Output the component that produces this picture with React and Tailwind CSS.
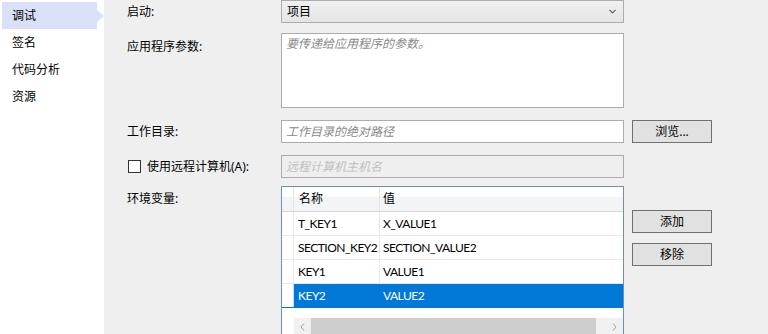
import React from 'react';

const font = { fontFamily: '"Noto Sans", "Noto Sans CJK SC", sans-serif' };
const cellFont = { fontFamily: 'Lato, "Noto Sans CJK SC", sans-serif' };

const navItems = ['调试', '签名', '代码分析', '资源'];

const envRows = [
  { name: 'T_KEY1', value: 'X_VALUE1' },
  { name: 'SECTION_KEY2', value: 'SECTION_VALUE2' },
  { name: 'KEY1', value: 'VALUE1' },
  { name: 'KEY2', value: 'VALUE2', selected: true },
];

const Button = ({ children, className = '' }) => (
  <button
    className={`w-[80px] h-[23px] bg-[#e1e1e1] border border-[#707070] text-[12px] text-black leading-none flex items-center justify-center ${className}`}
  >
    {children}
  </button>
);

const Label = ({ children, className = '' }) => (
  <div className={`w-[154px] shrink-0 text-[12px] text-black ${className}`}>{children}</div>
);

const App = () => {
  return (
    <div
      className="w-[768px] h-[334px] overflow-hidden flex bg-[#efefef] text-[12px]"
      style={font}
    >
      {/* sidebar */}
      <div className="w-[104px] shrink-0 bg-white pt-[2px]">
        {navItems.map((item, i) => (
          <div key={item} className="relative h-[27px] flex items-center">
            {i === 0 && (
              <>
                <div className="absolute left-[2px] top-0 w-[95px] h-[27px] bg-[#d9e0f7]" />
                <div className="absolute left-[97px] top-[8px] w-0 h-0 border-y-[6px] border-y-transparent border-l-[7px] border-l-[#d9e0f7]" />
              </>
            )}
            <span className="relative pl-[12px] text-black">{item}</span>
          </div>
        ))}
      </div>

      {/* main */}
      <div className="flex-1 pl-[23px]">
        {/* 启动 */}
        <div className="flex items-center h-[23px]">
          <Label>启动:</Label>
          <div className="w-[343px] h-[23px] border border-[#acacac] bg-gradient-to-b from-[#f0f0f0] to-[#e5e5e5] flex items-center justify-between pl-[5px] pr-[7px]">
            <span className="text-black">项目</span>
            <svg width="7" height="5" viewBox="0 0 7 5">
              <path d="M0.5 0.8 L3.5 3.8 L6.5 0.8" fill="none" stroke="#606060" strokeWidth="1.2" />
            </svg>
          </div>
        </div>

        {/* 应用程序参数 */}
        <div className="flex mt-[10px]">
          <Label className="pt-[5px]">应用程序参数:</Label>
          <div className="w-[343px] h-[75px] border border-[#acacac] bg-white px-[4px] pt-[1px]">
            <span className="italic text-[#8a8a8a]">要传递给应用程序的参数。</span>
          </div>
        </div>

        {/* 工作目录 */}
        <div className="flex items-center mt-[12px]">
          <Label>工作目录:</Label>
          <div className="w-[343px] h-[23px] border border-[#acacac] bg-white flex items-center px-[4px]">
            <span className="italic text-[#8a8a8a]">工作目录的绝对路径</span>
          </div>
          <Button className="ml-[8px]">浏览...</Button>
        </div>

        {/* 远程计算机 */}
        <div className="flex items-center mt-[12px]">
          <div className="w-[154px] shrink-0 flex items-center">
            <div className="w-[13px] h-[13px] border border-[#333333] bg-white ml-[1px]" />
            <span className="ml-[6px] text-black">使用远程计算机(A):</span>
          </div>
          <div className="w-[343px] h-[23px] border border-[#acacac] bg-[#efefef] flex items-center px-[4px]">
            <span className="italic text-[#c0c0c0]">远程计算机主机名</span>
          </div>
        </div>

        {/* 环境变量 */}
        <div className="flex mt-[8px]">
          <Label className="pt-[4px]">环境变量:</Label>
          <div
            className="w-[343px] h-[160px] border border-[#6d8fb9] bg-white flex flex-col shrink-0 tracking-[-0.5px]"
            style={cellFont}
          >
            {/* header */}
            <div className="flex h-[25px] border-b border-[#d5d5d5] bg-gradient-to-b from-white from-40% to-[#f3f4f6] to-40% tracking-normal">
              <div className="w-[12px] border-r border-[#e5e5e5]" />
              <div className="w-[86px] border-r border-[#e5e5e5] flex items-center pl-[5px] text-black" style={font}>名称</div>
              <div className="flex-1 flex items-center pl-[3px] text-black" style={font}>值</div>
            </div>
            {envRows.map((row) => (
              <div
                key={row.name}
                className={`flex h-[24px] border-b ${row.selected ? 'border-[#0078d7]' : 'border-[#e8e8e8]'}`}
              >
                <div
                  className={`w-[12px] border-r ${row.selected ? 'border-[#c5dbf3] bg-white' : 'border-[#e8e8e8]'}`}
                />
                <div
                  className={`w-[86px] flex items-center pl-[4px] ${
                    row.selected ? 'bg-[#0078d7] text-white' : 'border-r border-[#e8e8e8] text-black'
                  }`}
                >
                  {row.name}
                </div>
                <div
                  className={`flex-1 flex items-center pl-[3px] ${
                    row.selected ? 'bg-[#0078d7] text-white' : 'text-black'
                  }`}
                >
                  {row.value}
                </div>
              </div>
            ))}
            <div className="h-[10px]" />
            {/* horizontal scrollbar */}
            <div className="flex h-[17px] ml-[12px] bg-[#f0f0f0]">
              <div className="w-[17px] flex items-center justify-center">
                <svg width="5" height="8" viewBox="0 0 5 8">
                  <path d="M4 0.5 L1 4 L4 7.5" fill="none" stroke="#a0a0a0" strokeWidth="1" />
                </svg>
              </div>
              <div className="w-[285px] bg-[#cdcdcd]" />
              <div className="flex-1 flex items-center justify-end pr-[6px]">
                <svg width="5" height="8" viewBox="0 0 5 8">
                  <path d="M1 0.5 L4 4 L1 7.5" fill="none" stroke="#a0a0a0" strokeWidth="1" />
                </svg>
              </div>
            </div>
          </div>
          <div className="ml-[8px] pt-[24px] flex flex-col gap-[10px]">
            <Button>添加</Button>
            <Button>移除</Button>
          </div>
        </div>
      </div>
    </div>
  );
};

export default App;
